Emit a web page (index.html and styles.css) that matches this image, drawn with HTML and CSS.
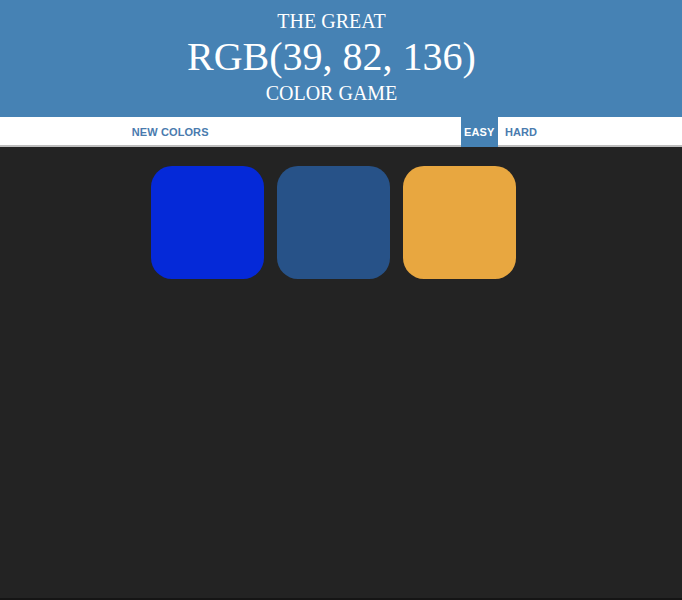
FILE: index.html
```html
<!DOCTYPE html>
<html lang="en">
<head>
<meta charset="utf-8">
<title>Color Game</title>
<link rel="stylesheet" href="styles.css">
</head>
<body>
<header class="masthead">
  <h1 class="title">
    <span class="title-small">THE GREAT</span>
    <span class="title-rgb">RGB(39, 82, 136)</span>
    <span class="title-small">COLOR GAME</span>
  </h1>
</header>
<nav class="stripe">
  <div class="stripe-inner">
    <button class="btn btn-reset">NEW COLORS</button>
    <span class="message"></span>
    <button class="btn btn-mode selected">EASY</button>
    <button class="btn btn-mode">HARD</button>
  </div>
</nav>
<main class="board">
  <div class="square sq-1"></div>
  <div class="square sq-2"></div>
  <div class="square sq-3"></div>
</main>
</body>
</html>
```

FILE: styles.css
```css
* { box-sizing: border-box; }
html, body { margin: 0; padding: 0; }
body {
  background: #232323;
  min-height: 100vh;
  border-bottom: 2px solid #151515;
  font-family: "Liberation Sans", Arial, sans-serif;
}
.masthead {
  background: #4682b4;
  color: #fff;
  padding: 10px 19px 13px 0;
  text-align: center;
}
.title {
  margin: 0;
  font-family: "Liberation Serif", "Times New Roman", serif;
  font-weight: normal;
}
.title-small {
  display: block;
  font-size: 20px;
  line-height: 22px;
}
.title-rgb {
  display: block;
  font-size: 40px;
  line-height: 44px;
  margin: 3px 0 3px;
}
.stripe {
  background: #fff;
  height: 30px;
  border-bottom: 2px solid #bdbdbd;
}
.stripe-inner {
  display: flex;
  justify-content: center;
  height: 100%;
  padding-right: 10px;
}
.btn {
  border: none;
  background: none;
  font-family: "Liberation Sans", Arial, sans-serif;
  font-weight: bold;
  font-size: 11px;
  letter-spacing: 0.1px;
  color: #4a7bae;
  padding: 0 4px;
  margin: 0;
  height: 30px;
  line-height: 29px;
  text-transform: uppercase;
}
.message { width: 248px; }
.btn-mode { padding: 0 7px; }
.btn-mode.selected {
  background: #4682b4;
  color: #fff;
  padding: 0 3.5px;
}
.board {
  display: flex;
  justify-content: center;
  gap: 13px;
  padding: 19px 15px 0 0;
}
.square {
  width: 113px;
  height: 113px;
  border-radius: 21px;
}
.sq-1 { background: #0529d8; }
.sq-2 { background: #275288; }
.sq-3 { background: #e8a740; }
```
